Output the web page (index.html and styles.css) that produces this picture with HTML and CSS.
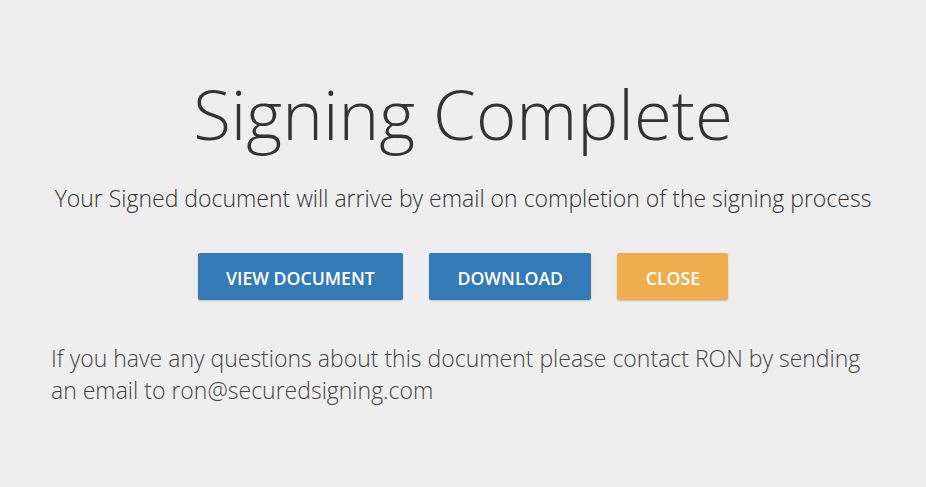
FILE: index.html
```html
<!DOCTYPE html>
<html>
<head>
<meta charset="utf-8">
<link rel="stylesheet" href="styles.css">
</head>
<body>
<main class="page">
  <h1 class="title">Signing Complete</h1>
  <p class="subtitle">Your Signed document will arrive by email on completion of the signing process</p>
  <div class="actions">
    <button class="btn btn-primary">View Document</button>
    <button class="btn btn-primary">Download</button>
    <button class="btn btn-warning">Close</button>
  </div>
  <p class="contact">If you have any questions about this document please contact RON by sending an email to ron@securedsigning.com</p>
</main>
</body>
</html>
```
FILE: styles.css
```css
html, body {
  margin: 0;
  padding: 0;
  background: #eeeeee;
}
body {
  font-family: "Open Sans", "Liberation Sans", sans-serif;
  color: #333333;
}
.page {
  padding: 73px 51px 0 51px;
  display: flex;
  flex-direction: column;
  align-items: center;
}
.title {
  margin: 0;
  font-weight: 300;
  font-size: 69px;
  line-height: 80px;
  color: #333333;
}
.subtitle {
  margin: 30px 0 0 0;
  font-weight: 300;
  font-size: 23px;
  line-height: 30px;
  color: #333333;
}
.actions {
  display: flex;
  gap: 26px;
  margin-top: 40px;
}
.btn {
  font-family: "Open Sans", "Liberation Sans", sans-serif;
  font-weight: 600;
  font-size: 17.7px;
  text-transform: uppercase;
  color: #ffffff;
  border: none;
  border-radius: 2px;
  height: 47px;
  padding: 2px 28.3px 0 28.3px;
  box-shadow: 0 1px 2px rgba(0,0,0,0.2);
}
.btn-primary { background: #337ab7; }
.btn-warning { background: #f0ad4e; }
.contact {
  align-self: stretch;
  margin: 42px 0 0 0;
  font-weight: 300;
  font-size: 23px;
  line-height: 32px;
  color: #444444;
}
```
